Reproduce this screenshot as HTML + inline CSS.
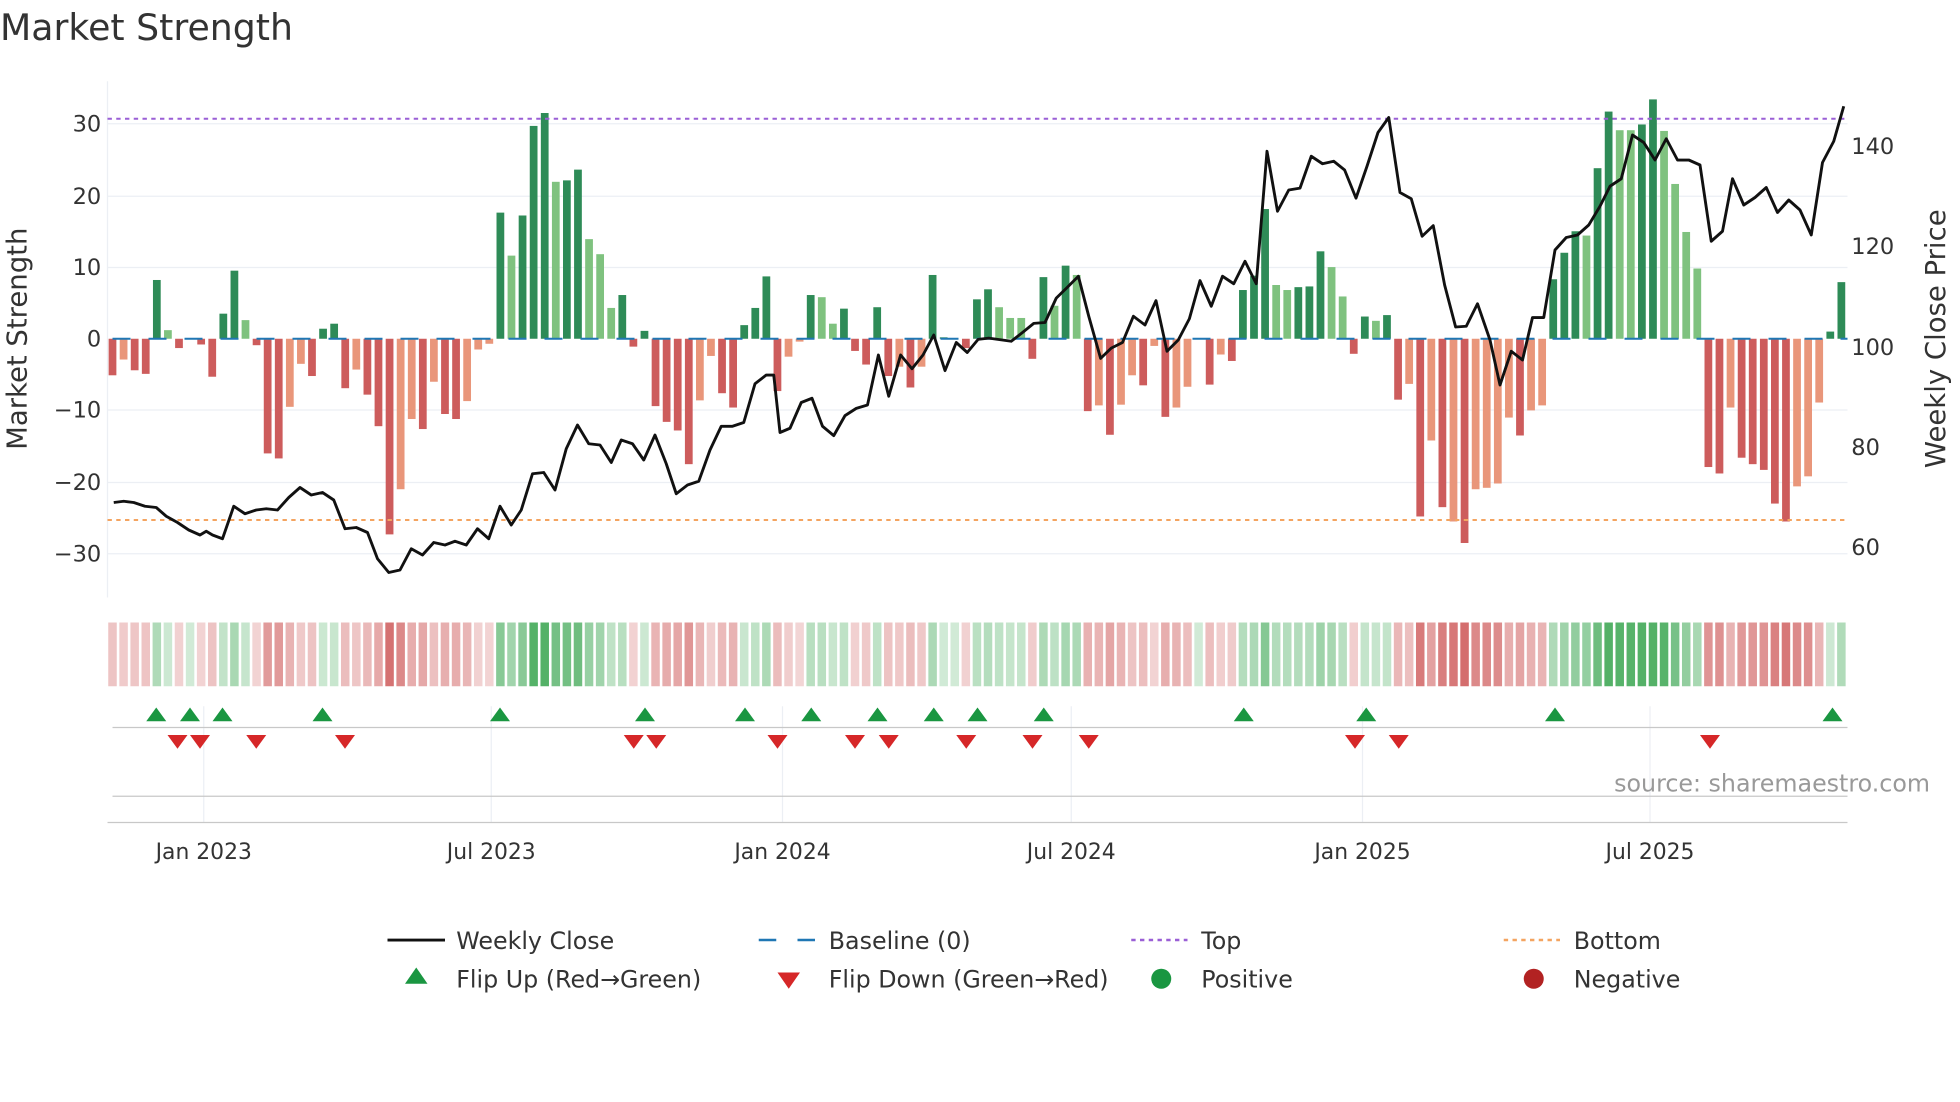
<!DOCTYPE html>
<html><head><meta charset="utf-8">
<style>
html,body{margin:0;padding:0;background:#fff;}
svg{display:block;}
text{font-family:"DejaVu Sans","Liberation Sans",sans-serif;fill:#333;}
</style></head>
<body>
<svg id="s" width="1960" height="1102" viewBox="0 0 1568 881.6" xmlns="http://www.w3.org/2000/svg">
<rect width="1568" height="881.6" fill="#fff"/>
<text x="0" y="32" font-size="29">Market Strength</text>
<g stroke="#eceff4" stroke-width="1">
<line x1="86" x2="1478" y1="99" y2="99"/><line x1="86" x2="1478" y1="157" y2="157"/>
<line x1="86" x2="1478" y1="214" y2="214"/><line x1="86" x2="1478" y1="328" y2="328"/>
<line x1="86" x2="1478" y1="386" y2="386"/><line x1="86" x2="1478" y1="443" y2="443"/>
<line x1="86" x2="86" y1="65" y2="478"/>
</g>
<g font-size="18" text-anchor="end">
<text x="81" y="105">30</text><text x="81" y="163">20</text><text x="81" y="220">10</text>
<text x="81" y="277">0</text><text x="81" y="334">−10</text><text x="81" y="392">−20</text><text x="81" y="449">−30</text>
</g>
<g font-size="18">
<text x="1481" y="123">140</text><text x="1481" y="203">120</text><text x="1481" y="284">100</text>
<text x="1481" y="364">80</text><text x="1481" y="444">60</text>
</g>
<text transform="translate(21,271) rotate(-90)" font-size="22" text-anchor="middle">Market Strength</text>
<text transform="translate(1556,271) rotate(-90)" font-size="22" text-anchor="middle">Weekly Close Price</text>
<g id="bars"></g>
<line x1="86" x2="1478" y1="95" y2="95" stroke="#9a5fd6" stroke-width="1.6" stroke-dasharray="3.5,3.5"/>
<line x1="86" x2="1478" y1="416" y2="416" stroke="#f4a460" stroke-width="1.6" stroke-dasharray="3.5,3.5"/>
<polyline fill="none" stroke="#111" stroke-width="2.3" stroke-linejoin="round" points="91,402 99,401 107,402 116,405 125,406 133,413 142,418 151,424 160,428 165,425 170,428 178,431 187,405 196,411 205,408 213,407 222,408 231,398 240,390 249,396 258,394 267,400 276,423 285,422 294,426 302,447 311,458 320,456 329,439 338,444 347,434 356,436 364,433 373,436 382,423 391,431 400,405 409,420 417,408 426,379 435,378 444,392 453,359 462,340 471,355 480,356 489,370 497,352 506,355 515,368 524,348 533,371 541,395 550,388 559,385 568,360 577,341 586,341 595,338 604,307 613,300 619,300 624,346 632,342.6 641,322 649.6,318.6 658,341 667,348.5 676,332.5 685,326.7 694,324 702.7,284 711,317 720.5,284 729.6,295 738.4,284 747,268 756,296.5 765,274 773.8,282 782.5,271.5 791,270.5 809,273 818,266 827,258.7 836,258 845,238.5 853.7,230 862.7,221 871,253 880.5,286.7 889,278.5 898,274 906.7,253 916,260 924.8,240.5 933.6,281 942.6,272 951.5,255 960,224.5 969,245 978,221 987,227 996,209 1005,227 1013.6,121 1022,169 1031,152 1040,150.5 1049,125 1058,131 1067,129 1075.7,136 1084.8,158.5 1093.6,133 1102.4,106 1111,94 1120,154 1129,159 1137.7,189 1146.6,180.5 1155.7,228 1164.5,261.6 1173,261 1182,243 1192,272 1200,308 1209,281 1218,288 1226,254 1235,254 1244,200 1253,190 1262,188 1271,180 1280,165 1288,149 1297,143 1306,108 1315,114 1324,128 1333,111 1342,128 1351,128 1360,132 1369,193 1378,185 1386,143 1395,164 1404,158 1413,150 1422,170 1431,160 1440,168 1449,188 1458,130 1467,113 1475,85"/>
<g id="strip"></g>
<g stroke="#eceff4" stroke-width="1">
<line x1="163" x2="163" y1="565" y2="658"/><line x1="393" x2="393" y1="565" y2="658"/>
<line x1="626" x2="626" y1="565" y2="658"/><line x1="857" x2="857" y1="565" y2="658"/>
<line x1="1090" x2="1090" y1="565" y2="658"/><line x1="1320" x2="1320" y1="565" y2="658"/>
</g>
<line x1="90" x2="1478" y1="582" y2="582" stroke="#c8c8c8" stroke-width="1"/>
<line x1="90" x2="1478" y1="637" y2="637" stroke="#c8c8c8" stroke-width="1"/>
<line x1="86" x2="1478" y1="658" y2="658" stroke="#c8c8c8" stroke-width="1"/>
<g id="marks"></g>
<text x="1544" y="633" font-size="19" text-anchor="end" style="fill:#999">source: sharemaestro.com</text>
<g font-size="17.5" text-anchor="middle">
<text x="163" y="687">Jan 2023</text><text x="393" y="687">Jul 2023</text><text x="626" y="687">Jan 2024</text>
<text x="857" y="687">Jul 2024</text><text x="1090" y="687">Jan 2025</text><text x="1320" y="687">Jul 2025</text>
</g>
<line x1="310" x2="356" y1="752" y2="752" stroke="#111" stroke-width="2.3"/>
<text x="365" y="759" font-size="19">Weekly Close</text>
<line x1="607" x2="652" y1="752" y2="752" stroke="#1f77b4" stroke-width="2" stroke-dasharray="14,17"/>
<text x="663" y="759" font-size="19">Baseline (0)</text>
<line x1="905" x2="950" y1="752" y2="752" stroke="#9a5fd6" stroke-width="2" stroke-dasharray="3.5,3.5"/>
<text x="961" y="759" font-size="19">Top</text>
<line x1="1203" x2="1248" y1="752" y2="752" stroke="#f4a460" stroke-width="2" stroke-dasharray="3.5,3.5"/>
<text x="1259" y="759" font-size="19">Bottom</text>
<polygon points="333,774 342,787 324,787" fill="#1a9641"/>
<text x="365" y="790" font-size="19">Flip Up (Red→Green)</text>
<polygon points="622,778 640,778 631,791" fill="#d62728"/>
<text x="663" y="790" font-size="19">Flip Down (Green→Red)</text>
<circle cx="929" cy="783" r="8" fill="#1a9641"/>
<text x="961" y="790" font-size="19">Positive</text>
<circle cx="1227" cy="783" r="8" fill="#b22222"/>
<text x="1259" y="790" font-size="19">Negative</text>
</svg>
<script>
var V=[-5.1,-2.9,-4.4,-4.9,8.2,1.2,-1.3,0,-0.8,-5.3,3.5,9.5,2.6,-0.9,-16,-16.7,-9.5,-3.5,-5.2,1.4,2.1,-6.9,-4.3,-7.8,-12.2,-27.3,-21,-11.2,-12.6,-6,-10.5,-11.2,-8.7,-1.5,-0.7,17.6,11.6,17.2,29.7,31.5,21.9,22.1,23.6,13.9,11.8,4.3,6.1,-1.1,1.1,-9.4,-11.6,-12.8,-17.5,-8.6,-2.4,-7.6,-9.6,1.9,4.3,8.7,-7.3,-2.5,-0.4,6.1,5.8,2.1,4.2,-1.7,-3.6,4.4,-5.2,-3.9,-6.8,-3.9,8.9,0.2,0,-1.3,5.5,6.9,4.4,2.9,2.9,-2.8,8.6,4.6,10.2,8.9,-10.1,-9.3,-13.4,-9.2,-5.1,-6.5,-1,-10.9,-9.6,-6.7,0,-6.4,-2.2,-3.1,6.8,8.8,18.1,7.5,6.8,7.2,7.3,12.2,10,5.9,-2.1,3.1,2.5,3.3,-8.5,-6.3,-24.8,-14.2,-23.5,-25.5,-28.5,-21,-20.8,-20.2,-11,-13.5,-10,-9.3,8.3,12,15,14.4,23.8,31.7,29.1,29.1,29.9,33.4,29,21.6,14.9,9.8,-17.9,-18.8,-9.6,-16.6,-17.5,-18.3,-23,-25.5,-20.6,-19.2,-8.9,1,7.9];
var K=["R","O","R","R","D","L","R","N","R","R","D","D","L","R","R","R","O","O","R","D","D","R","O","R","R","R","O","O","R","O","R","R","O","O","O","D","L","D","D","D","L","D","D","L","L","L","D","R","D","R","R","R","R","O","O","R","R","D","D","D","R","O","O","D","L","L","D","R","R","D","R","O","R","O","D","D","N","R","D","D","L","L","L","R","D","L","D","L","R","O","R","O","O","R","O","R","O","O","N","R","O","R","D","D","D","L","L","D","D","D","L","L","R","D","L","D","R","O","R","O","R","O","R","O","O","O","O","R","O","O","D","D","D","L","D","D","L","L","D","D","L","L","L","L","R","R","O","R","R","R","R","R","O","O","O","D","D"];
var ns="http://www.w3.org/2000/svg";
function el(t,a,p){var e=document.createElementNS(ns,t);for(var k in a)e.setAttribute(k,a[k]);p.appendChild(e);return e;}
var bars=document.getElementById('bars'),strip=document.getElementById('strip'),marks=document.getElementById('marks');
var col={D:"#2e8b57",L:"#7fc27f",R:"#cd5c5c",O:"#e9967a",N:"#2e8b57"};
for(var i=0;i<V.length;i++){
 var v=V[i],x=90+8.866*i,k=K[i]||(v>=0?"D":"R");
 var h=Math.abs(v)*5.733;
 if(h>0.3) el('rect',{x:x-3.1,y:v>=0?271-h:271,width:6.2,height:h,fill:col[k]},bars);
 var a=0.22+0.6*Math.min(Math.abs(v)/30,1);
 el('rect',{x:x-3.4,y:498,width:6.8,height:51,fill:v>=0?"rgba(46,160,70,"+a+")":"rgba(200,70,70,"+a+")"},strip);
}
for(var j=0;j<50;j++){var x0=90+j*28.8;if(x0>1478)break;el('line',{x1:x0,x2:Math.min(x0+14.4,1478),y1:271,y2:271,stroke:"#1f77b4","stroke-width":1.6},bars);}
var up=[125,152,178,258,400,516,596,649,702,747,782,835,995,1093,1244,1466];
var dn=[142,160,205,276,507,525,622,684,711,773,826,871,1084,1119,1368];
up.forEach(function(x){el('polygon',{points:(x)+",566 "+(x+8)+",577 "+(x-8)+",577",fill:"#1a9641"},marks);});
dn.forEach(function(x){el('polygon',{points:(x-8)+",588 "+(x+8)+",588 "+x+",599",fill:"#d62728"},marks);});
</script>
</body></html>
